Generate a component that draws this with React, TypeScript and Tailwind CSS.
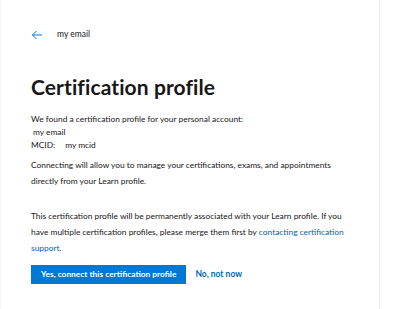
import React from "react";

export default function App() {
  return (
    <div
      className="flex h-[309px] w-[400px] bg-white text-[#171717]"
      style={{ fontFamily: 'Lato, "Open Sans", sans-serif' }}
    >
      <div className="w-[380px] shrink-0 border-l border-r border-l-[#f6f6f6] border-r-[#ededed] pl-[30px] pr-[6px]">
        <div className="mt-[27px] flex h-[14px] items-center">
          <svg width="12" height="10" viewBox="0 0 12 10" className="mt-[2px]">
            <path d="M11 5H1.5M5.5 1L1.5 5l4 4" fill="none" stroke="#0078d4" strokeWidth="1" />
          </svg>
          <span className="ml-[14px] text-[8.5px] leading-[14px]">my email</span>
        </div>
        <h1 className="mt-[31px] text-[21px] font-bold leading-[30px] tracking-[0.1px]">
          Certification profile
        </h1>
        <div className="mt-[11px] text-[8.4px] leading-[13px]">
          <p>We found a certification profile for your personal account:</p>
          <p className="pl-[2px]">my email</p>
          <p>
            MCID:<span className="ml-[10px]">my mcid</span>
          </p>
        </div>
        <p className="mt-[5px] text-[8.4px] leading-[16px]">
          Connecting will allow you to manage your certifications, exams, and appointments
          <br />
          directly from your Learn profile.
        </p>
        <p className="mt-[19px] text-[8.4px] leading-[16px]">
          This certification profile will be permanently associated with your Learn profile. If you
          <br />
          have multiple certification profiles, please merge them first by{" "}
          <span className="text-[#0065b3]">
            contacting certification
            <br />
            support
          </span>
          .
        </p>
        <div className="mt-[9px] flex items-center">
          <button className="h-[19px] bg-[#0078d4] px-[10px] text-[8.4px] font-bold text-white">
            Yes, connect this certification profile
          </button>
          <span className="ml-[9px] text-[8.5px] font-bold text-[#0065b3]">No, not now</span>
        </div>
      </div>
    </div>
  );
}
